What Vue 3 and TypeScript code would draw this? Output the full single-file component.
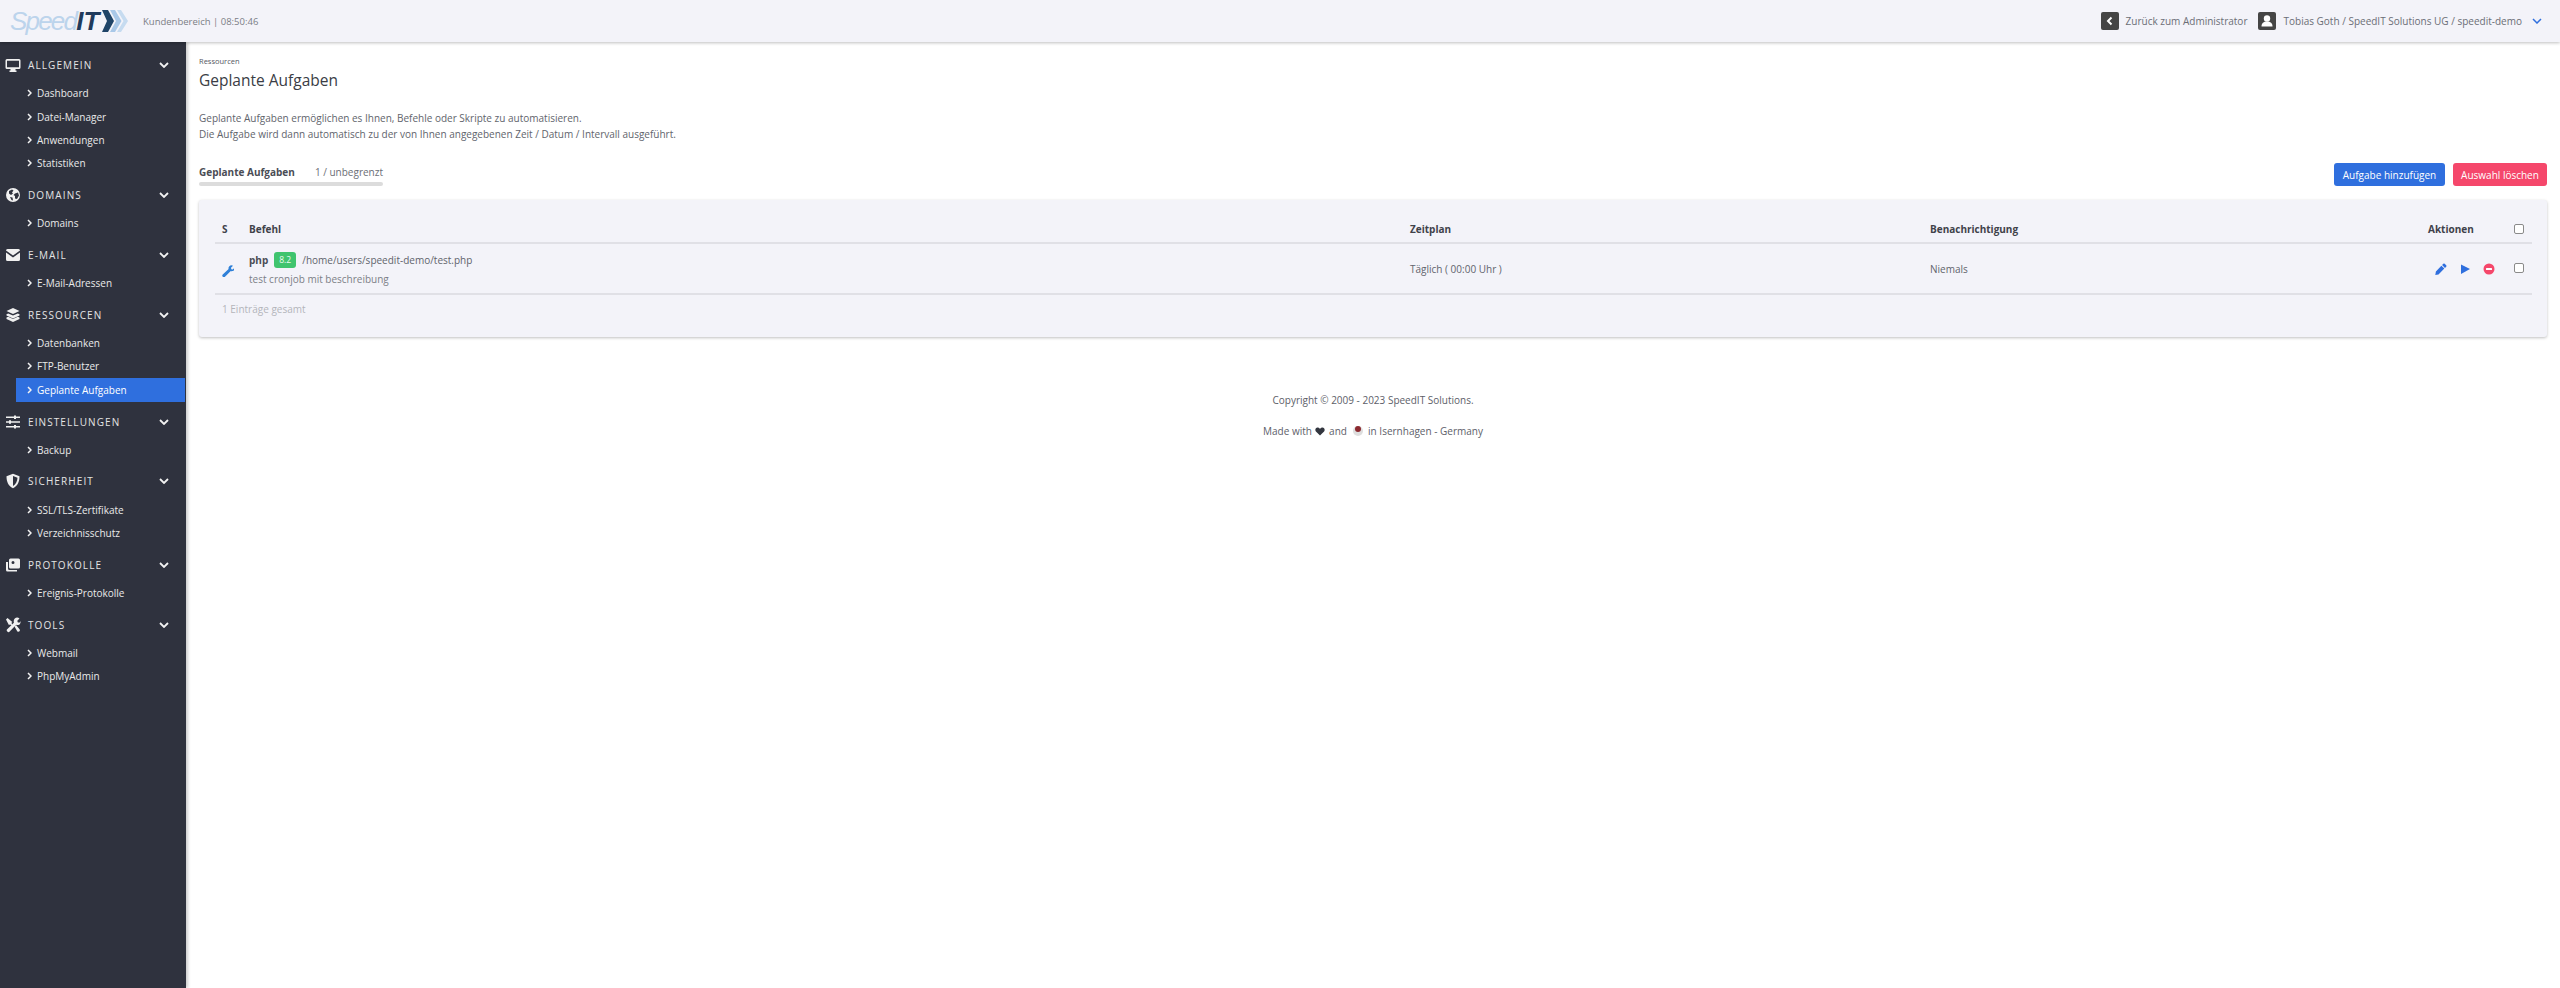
<script setup lang="ts">
interface Section { title: string; icon: string; items: string[] }
const sections: Section[] = [
  { title: 'ALLGEMEIN', icon: 'desktop', items: ['Dashboard', 'Datei-Manager', 'Anwendungen', 'Statistiken'] },
  { title: 'DOMAINS', icon: 'globe', items: ['Domains'] },
  { title: 'E-MAIL', icon: 'mail', items: ['E-Mail-Adressen'] },
  { title: 'RESSOURCEN', icon: 'layers', items: ['Datenbanken', 'FTP-Benutzer', 'Geplante Aufgaben'] },
  { title: 'EINSTELLUNGEN', icon: 'sliders', items: ['Backup'] },
  { title: 'SICHERHEIT', icon: 'shield', items: ['SSL/TLS-Zertifikate', 'Verzeichnisschutz'] },
  { title: 'PROTOKOLLE', icon: 'images', items: ['Ereignis-Protokolle'] },
  { title: 'TOOLS', icon: 'tools', items: ['Webmail', 'PhpMyAdmin'] },
]
const activeItem = 'Geplante Aufgaben'
</script>

<template>
  <div class="page">
    <header class="topbar">
      <div class="logo">
        <span class="logo-speed">Speed</span><span class="logo-it">IT</span>
        <svg class="logo-arrows" viewBox="0 0 26 24" width="26" height="24">
          <path d="M0 1h6l6 11-6 11H0l5-11z" fill="#1f4468" />
          <path d="M8 1h5l6.500 11L13 23H8l6-11z" fill="#a9c8e8" />
          <path d="M15 1h4l7 11-7 11h-4l6.500-11z" fill="#c6dbf0" />
        </svg>
      </div>
      <span class="clock">Kundenbereich | 08:50:46</span>
      <div class="topbar-right">
        <span class="square">
          <svg viewBox="0 0 18 18" width="18" height="18"><path d="M10.500 5.500 7 9l3.500 3.500" fill="none" stroke="#fff" stroke-width="2" /></svg>
        </span>
        <span class="top-text back">Zurück zum Administrator</span>
        <span class="square">
          <svg viewBox="0 0 18 18" width="18" height="18"><circle cx="9" cy="6.500" r="3.200" fill="#fff" /><path d="M3.500 14.500c0-3.500 2-5 5.500-5s5.500 1.500 5.500 5z" fill="#fff" /></svg>
        </span>
        <span class="top-text">Tobias Goth / SpeedIT Solutions UG / speedit-demo</span>
        <svg class="user-chevron" viewBox="0 0 10 6" width="10" height="6"><path d="M1 1l4 4 4-4" fill="none" stroke="#2f6fde" stroke-width="1.500" /></svg>
      </div>
    </header>

    <div class="body-row">
      <aside class="sidebar">
        <section v-for="s in sections" :key="s.title" class="nav-section">
          <div class="nav-head">
            <svg class="nav-icon" viewBox="0 0 16 16" width="16" height="16">
              <g v-if="s.icon === 'desktop'" fill="#f0f0f0">
                <path fill-rule="evenodd" d="M2 2h12a1.500 1.500 0 0 1 1.500 1.500v7A1.500 1.500 0 0 1 14 12H2a1.500 1.500 0 0 1-1.500-1.500v-7A1.500 1.500 0 0 1 2 2zm0 1.800v6.400h12V3.800z" />
                <path d="M5.500 12h5v1.500h1V15h-7v-1.500h1z" />
              </g>
              <path v-else-if="s.icon === 'globe'" fill="#f0f0f0" fill-rule="evenodd" d="M8 1a7 7 0 1 0 0 14A7 7 0 0 0 8 1zM4 4l3-1.500 1.500 1L7 5.500l1 1-2 1.500-2-1.500zm6 2.500 3-1 1 3-2 3.500-2-.5v-2.500l-1.500-1zM5 10l2.500.5.500 3-1.500-.5z" />
              <g v-else-if="s.icon === 'mail'" fill="#f0f0f0">
                <path d="M1 3.500A1.500 1.500 0 0 1 2.500 2h11A1.500 1.500 0 0 1 15 3.500L8 8.500z" />
                <path d="M1 5.500V12.500A1.500 1.500 0 0 0 2.500 14h11a1.500 1.500 0 0 0 1.500-1.500V5.500L8 10.500z" />
              </g>
              <g v-else-if="s.icon === 'layers'" fill="#f0f0f0">
                <path d="M8 1l6.500 3L8 7 1.500 4z" />
                <path d="M3.200 6.400 8 8.600l4.800-2.200 1.700.8v1.200L8 11.400 1.500 8.400V7.200z" />
                <path d="M3.200 9.800 8 12l4.800-2.200 1.700.8v1.300L8 15l-6.500-3.100v-1.300z" />
              </g>
              <g v-else-if="s.icon === 'sliders'" fill="#f0f0f0">
                <path d="M1 2.500h8V1.500h2v1h4v1.500h-4v1H9V4H1zM1 7.300h3v-1h2v1h9v1.500H6v1H4v-1H1zM1 12h8v-1h2v1h4v1.500h-4v1H9v-1H1z" />
              </g>
              <path v-else-if="s.icon === 'shield'" fill="#f0f0f0" fill-rule="evenodd" d="M8 .800 14.500 3.300c0 5-1.500 9.500-6.500 12C3 12.800 1.500 8.300 1.500 3.300zM8 3v10c3-1.900 4.300-5 4.500-8.300z" />
              <g v-else-if="s.icon === 'images'" fill="#f0f0f0">
                <path fill-rule="evenodd" d="M5.500 1.500h8A1.500 1.500 0 0 1 15 3v7a1.500 1.500 0 0 1-1.500 1.500h-8A1.500 1.500 0 0 1 4 10V3a1.500 1.500 0 0 1 1.500-1.500zM8 4a1.500 1.500 0 1 0 0 3 1.500 1.500 0 0 0 0-3z" />
                <path d="M1 5h2v6.500A1.500 1.500 0 0 0 4.500 13H12v1.500H2.500A1.500 1.500 0 0 1 1 13z" />
              </g>
              <g v-else fill="#f0f0f0">
                <path d="M1 2.500 2.500 1l4.800 4-1 1 1.200 1.200-1.300 1.300L5 7.300l-1 1z" />
                <path d="M9.800 1.500a3.600 3.600 0 0 1 4.700 0l-2.200 2.200.4 1.600 1.600.4 1.200-1.500c.3 1.700-.5 3.400-2.300 3.800-.9.200-1.500 0-2-.2l-6.500 6.700a1.600 1.600 0 0 1-2.500-2.300l6.700-6.500c-.4-1.500-.2-3 .9-4.200z" />
                <path d="M9.500 9.500 11 8l3.500 4.200c.6.700.5 1.500 0 2.100-.6.600-1.400.7-2.100.1z" />
              </g>
            </svg>
            <span class="nav-title">{{ s.title }}</span>
            <svg class="nav-chevron" viewBox="0 0 10 6" width="10" height="6"><path d="M1 1l4 4 4-4" fill="none" stroke="#f2f2f2" stroke-width="1.800" /></svg>
          </div>
          <ul class="nav-list">
            <li v-for="it in s.items" :key="it" class="nav-item" :class="{ active: it === activeItem }">
              <svg viewBox="0 0 5 8" width="5" height="8"><path d="M1 1l3 3-3 3" fill="none" stroke="#f2f2f2" stroke-width="1.500" /></svg>
              <span>{{ it }}</span>
            </li>
          </ul>
        </section>
      </aside>

      <main class="main">
        <div class="crumb">Ressourcen</div>
        <h1>Geplante Aufgaben</h1>
        <p class="intro">
          Geplante Aufgaben ermöglichen es Ihnen, Befehle oder Skripte zu automatisieren.<br />
          Die Aufgabe wird dann automatisch zu der von Ihnen angegebenen Zeit / Datum / Intervall ausgeführt.
        </p>

        <div class="toolbar">
          <div class="quota">
            <div class="quota-text"><strong>Geplante Aufgaben</strong><span>1 / unbegrenzt</span></div>
            <div class="quota-bar"></div>
          </div>
          <div class="buttons">
            <button class="btn blue">Aufgabe hinzufügen</button>
            <button class="btn red">Auswahl löschen</button>
          </div>
        </div>

        <div class="card">
          <div class="grid head">
            <div class="col-s">S</div>
            <div>Befehl</div>
            <div>Zeitplan</div>
            <div>Benachrichtigung</div>
            <div>Aktionen</div>
            <div class="col-check"><span class="check"></span></div>
          </div>
          <div class="grid row">
            <div class="col-s">
              <svg viewBox="0 0 16 16" width="12" height="12" class="wrench"><path fill="#2f80d8" d="M9.800 1.500a4 4 0 0 1 4.900-.4L12 3.800l.4 1.800 1.800.4 2.700-2.700c.3 2-.5 4-2.500 4.700-1 .3-2 .2-2.700-.1l-7.700 7.700a2 2 0 0 1-3-2.800L8.800 5.200c-.4-1.300-.1-2.700 1-3.700z" /></svg>
            </div>
            <div class="cmd">
              <div class="cmd-line"><strong>php</strong><span class="badge">8.2</span><span>/home/users/speedit-demo/test.php</span></div>
              <div class="cmd-desc">test cronjob mit beschreibung</div>
            </div>
            <div>Täglich ( 00:00 Uhr )</div>
            <div>Niemals</div>
            <div class="actions">
              <svg viewBox="0 0 12 12" width="12" height="12"><path fill="#2f6fde" d="M8.300.8a1 1 0 0 1 1.400 0l1.500 1.500a1 1 0 0 1 0 1.400L10 4.900 7.100 2zM6.400 2.700l2.900 2.900L3.500 11.400l-3.200.6.600-3.500z" /></svg>
              <svg viewBox="0 0 12 12" width="12" height="12"><path fill="#2f6fde" d="M2 1.500 11 6l-9 5z" /></svg>
              <svg viewBox="0 0 12 12" width="12" height="12"><circle cx="6" cy="6" r="5.500" fill="#f5476b" /><rect x="3" y="5" width="6" height="2" rx=".5" fill="#fff" /></svg>
            </div>
            <div class="col-check"><span class="check"></span></div>
          </div>
          <div class="total">1 Einträge gesamt</div>
        </div>

        <footer class="foot">
          <p>Copyright © 2009 - 2023 SpeedIT Solutions.</p>
          <p class="made">
            Made with
            <svg viewBox="0 0 12 11" width="10" height="9"><path fill="#33363f" d="M6 10.500 1 5.500C-.5 3.500.5.500 3 .5c1.300 0 2.300.7 3 1.800C6.700 1.200 7.700.5 9 .5c2.500 0 3.500 3 2 5z" /></svg>
            and
            <span class="bean"><i></i></span>
            in Isernhagen - Germany
          </p>
        </footer>
      </main>
    </div>
  </div>
</template>

<style scoped>
.page, .page * { box-sizing: border-box; }
.page {
  width: 2560px;
  height: 988px;
  overflow: hidden;
  display: flex;
  flex-direction: column;
  font-family: "Open Sans", "Noto Sans", sans-serif;
  font-size: 10px;
  color: #5d6069;
  background: #fff;
}
.topbar {
  height: 42px;
  flex: none;
  display: flex;
  align-items: center;
  background: #f3f3f9;
  box-shadow: 0 1px 3px rgba(0, 0, 0, 0.25);
  position: relative;
  z-index: 2;
  padding: 0 16px 0 10px;
}
.logo {
  width: 133px;
  flex: none;
  display: flex;
  align-items: center;
  font-family: "Liberation Sans", sans-serif;
  font-style: italic;
  font-size: 26px;
  line-height: 1;
}
.logo-speed { color: #bcd4ec; letter-spacing: -1.800px; }
.logo-it { color: #1f3a5c; font-weight: 700; }
.logo-arrows { margin-left: 3px; }
.clock { color: #7b7d85; font-size: 9.500px; }
.topbar-right {
  margin-left: auto;
  display: flex;
  align-items: center;
}
.square {
  width: 18px;
  height: 18px;
  background: #454545;
  border-radius: 2px;
  display: flex;
  margin-right: 7px;
}
.top-text { color: #6b6e76; }
.back { margin-right: 11px; }
.user-chevron { margin-left: 10px; margin-right: 2px; }

.body-row {
  flex: 1;
  display: flex;
  min-height: 0;
}
.sidebar {
  width: 186px;
  flex: none;
  background: #2f323e;
  padding-top: 11px;
  box-shadow: 2px 0 3px rgba(0, 0, 0, 0.2);
  position: relative;
  z-index: 1;
}
.nav-section { margin-bottom: 8px; }
.nav-head {
  height: 24px;
  display: flex;
  align-items: center;
  padding-left: 5px;
  color: #e4e4e4;
}
.nav-icon { flex: none; }
.nav-title {
  margin-left: 7px;
  font-size: 10px;
  letter-spacing: 1.100px;
  font-weight: 500;
  flex: 1;
}
.nav-chevron { margin-right: 17px; }
.nav-list {
  list-style: none;
  margin: 4.500px 0 0;
  padding: 0 1px 0 16px;
}
.nav-item {
  height: 23.400px;
  display: flex;
  align-items: center;
  padding-left: 11px;
  gap: 5px;
  color: #eaeaea;
}
.nav-item.active {
  background: #2f6fde;
  color: #fff;
}

.main {
  flex: 1;
  min-width: 0;
  padding: 13px 13px 0;
  position: relative;
}
.crumb {
  font-size: 7.500px;
  line-height: 12px;
  color: #55585f;
}
h1 {
  margin: 1px 0 0;
  font-size: 15.500px;
  line-height: 24px;
  font-weight: 500;
  color: #3a3d45;
}
.intro {
  margin: 18px 0 0;
  line-height: 16px;
  color: #61646c;
}
.toolbar {
  margin-top: 22px;
  display: flex;
  justify-content: space-between;
  align-items: flex-start;
}
.quota { width: 184px; }
.quota-text {
  display: flex;
  justify-content: space-between;
  line-height: 16px;
  color: #6b6e76;
}
.quota-text strong { color: #4a4d55; font-weight: 700; }
.quota-bar {
  margin-top: 2px;
  height: 4px;
  border-radius: 2px;
  background: #dcdcdc;
}
.buttons {
  display: flex;
  gap: 8px;
  margin-top: -1px;
}
.btn {
  border: none;
  height: 23px;
  border-radius: 3px;
  color: #fff;
  font: inherit;
  padding: 0;
}
.btn.blue { background: #2f6fde; width: 111px; }
.btn.red { background: #f5476b; width: 94px; }

.card {
  margin-top: 14px;
  height: 137px;
  background: #f3f3f9;
  border-radius: 3px;
  box-shadow: 0 1px 3px rgba(0, 0, 0, 0.25);
  padding: 14px 15px 0 16px;
}
.grid {
  display: grid;
  grid-template-columns: 34px 1161px 520px 498px 86px 1fr;
  align-items: center;
  border-bottom: 2px solid #e0e0e6;
}
.head {
  height: 30px;
  padding-top: 2px;
  font-weight: 700;
  color: #3f424a;
}
.row { height: 51px; color: #61646c; }
.col-s { padding-left: 7px; }
.wrench { display: block; margin-top: 4px; }
.cmd-line {
  display: flex;
  align-items: center;
  gap: 6px;
  height: 17px;
  margin-top: 1px;
}
.cmd-line strong { color: #4a4d55; }
.badge {
  width: 22px;
  height: 16px;
  background: #3fc46e;
  color: #eafbef;
  border-radius: 3px;
  font-size: 8.500px;
  display: flex;
  align-items: center;
  justify-content: center;
}
.cmd-desc { margin-top: 4px; color: #7c7f87; line-height: 15px; }
.actions {
  display: flex;
  gap: 12px;
  padding-left: 7px;
}
.col-check { display: flex; }
.check {
  width: 10px;
  height: 10px;
  margin-left: 0;
  margin-top: -1px;
  border: 1px solid #8a8a8a;
  border-radius: 2px;
  background: #fff;
}
.total {
  margin-top: 6px;
  padding-left: 7px;
  line-height: 16px;
  color: #b3b5bb;
}
.foot {
  margin-top: 55px;
  text-align: center;
  color: #5d6069;
}
.foot p { margin: 0; line-height: 16px; }
.foot .made { margin-top: 15px; }
.foot svg { vertical-align: -1px; margin: 0 1px; }
.bean {
  display: inline-block;
  width: 10px;
  height: 10px;
  border-radius: 50%;
  background: #dedede;
  vertical-align: -1px;
  margin: 0 3px;
  position: relative;
}
.bean i {
  position: absolute;
  left: 2px;
  top: 0;
  width: 6px;
  height: 6px;
  border-radius: 50%;
  background: #8c2a30;
}
</style>
